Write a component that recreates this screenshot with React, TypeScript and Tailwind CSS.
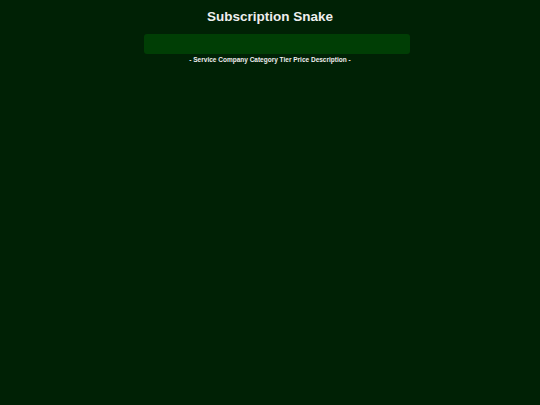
export default function App() {
  return (
    <div className="min-h-screen w-full bg-[#002105] flex flex-col items-center font-['Liberation_Sans',Arial,sans-serif] text-[#eeeeee]">
      <h1 className="mt-[8px] text-[13.5px] font-bold leading-[17px]">Subscription Snake</h1>

      {/* game board strip */}
      <div className="mt-[9px] ml-[14px] w-[266px] h-[20px] rounded-[3px] bg-[#003e05]" />

      <p className="mt-[1px] text-[6.5px] font-bold leading-[9px]">
        - Service Company Category Tier Price Description -
      </p>
    </div>
  );
}
